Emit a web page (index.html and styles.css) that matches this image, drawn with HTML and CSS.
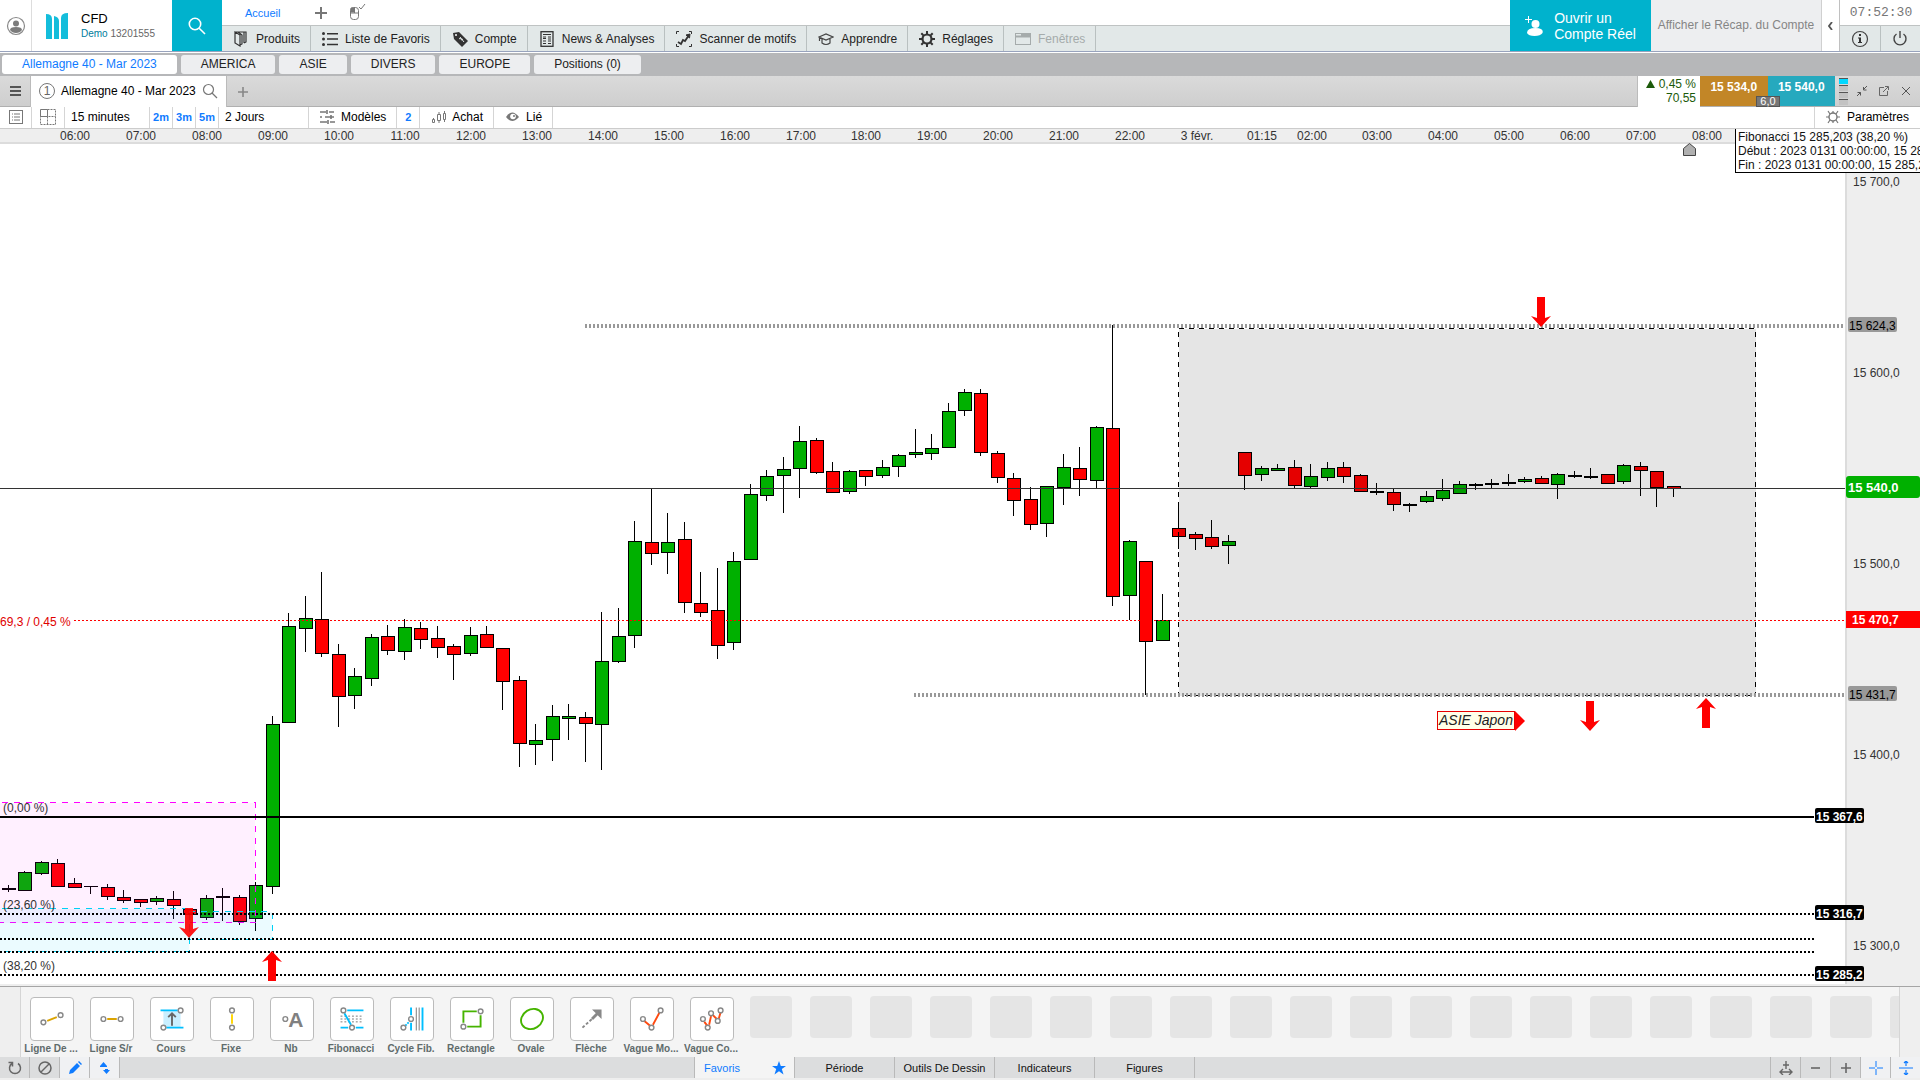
FILE: index.html
```html
<!DOCTYPE html>
<html lang="fr">

<head>
    <meta charset="UTF-8">
    <title>Allemagne 40 - Mar 2023</title>
    <link rel="stylesheet" href="styles.css">
</head>

<body>
    <header class="header">
        <button class="user" aria-label="Profil">
            <svg width="20" height="20" viewBox="0 0 20 20"><circle cx="10" cy="10" r="8.5" fill="none" stroke="#8a8a8a" stroke-width="1.2"/><circle cx="10" cy="7.5" r="3" fill="#7c7c7c"/><path d="M4 14q0-3 6-3t6 3q-2 3-6 3t-6-3z" fill="#7c7c7c"/></svg>
        </button>
        <div class="account">
            <svg width="22" height="26" viewBox="0 0 22 26" fill="#14bddb"><path d="M0 1q6 0 6 5v20H0zM8 3q5 1 5 5v18H8zM15 5q0-5 7-5v26h-7z"/></svg>
            <div>
                <div class="account-name">CFD</div>
                <div class="account-id"><span>Demo</span> 13201555</div>
            </div>
        </div>
        <button class="search" aria-label="Rechercher">
            <svg width="18" height="18" viewBox="0 0 18 18" fill="none" stroke="#fff" stroke-width="1.6"><circle cx="7" cy="7" r="5.7"/><path d="M11.2 11.2L17 17"/></svg>
        </button>
        <div class="menus">
            <div class="pages">
                <a href="#">Accueil</a>
                <button aria-label="Ajouter"><svg width="12" height="12" viewBox="0 0 12 12" stroke="#777" stroke-width="2"><path d="M6 0v12M0 6h12"/></svg></button>
                <button aria-label="Souris"><svg width="18" height="18" viewBox="0 0 18 18" fill="none" stroke="#777"><rect x="1.5" y="3.500" width="8" height="12" rx="3"/><path d="M1.500 9h8M5.500 3.500V9M10 3l2 2 4-5" /><path d="M2 4h3v4H2z" fill="#777"/></svg></button>
            </div>
            <nav class="toolbar">
                <button><svg width="16" height="16" viewBox="0 0 16 16" fill="none" stroke="#333" stroke-width="1.2"><path d="M2 1h11v10l-2 1M2 1l5 3v11l-5-3zM5 1l4 3v9l-2 1M11 1v11"/></svg>Produits</button>
                <button><svg width="16" height="16" viewBox="0 0 16 16" fill="#333"><circle cx="1.500" cy="2.500" r="1.500"/><circle cx="1.500" cy="8" r="1.500"/><circle cx="1.500" cy="13.500" r="1.500"/><path d="M5 2h11v1.500H5zM5 7.300h11v1.500H5zM5 12.700h11v1.500H5z"/></svg>Liste de Favoris</button>
                <button><svg width="16" height="16" viewBox="0 0 16 16"><path d="M1 2l6-1 9 9-6 6-8-8z" fill="#333"/><circle cx="4" cy="4" r="1" fill="#fff"/><path d="M7 8q2-2 2 0t2 0M8 6l4 5" stroke="#e2e8e8" fill="none"/></svg>Compte</button>
                <button><svg width="16" height="16" viewBox="0 0 16 16" fill="none" stroke="#333"><rect x="2" y=".7" width="12" height="14.600" stroke-width="1.300"/><path d="M4 3.500h8M4 6h3M4 7.500h3M9 6h3M9 8h3M4 10h3M9 10h3M4 12.500h3M9 12.500h3"/></svg>News &amp; Analyses</button>
                <button><svg width="16" height="16" viewBox="0 0 16 16" fill="none" stroke="#333"><path d="M.5 3V.5H3M13 .5h2.500V3M15.500 13v2.500H13M3 15.500H.5V13"/><path d="M2 11l3 2 2-4 2 1 4-6" stroke-width="1.800"/><path d="M10 4l4-1-.5 4z" fill="#333"/></svg>Scanner de motifs</button>
                <button><svg width="16" height="16" viewBox="0 0 16 16" fill="none" stroke="#444" stroke-width="1.200"><path d="M1 6l7-3 7 3-7 3zM4 8v4q4 3 8 0V8M1.500 6v4"/></svg>Apprendre</button>
                <button><svg width="16" height="16" viewBox="0 0 16 16" fill="none" stroke="#333"><circle cx="8" cy="8" r="4.500" stroke-width="2.200"/><path d="M8 0v3M8 13v3M0 8h3M13 8h3M2.300 2.300l2 2M11.700 11.700l2 2M13.700 2.300l-2 2M4.300 11.700l-2 2" stroke-width="2"/></svg>Réglages</button>
                <button disabled><svg width="16" height="16" viewBox="0 0 16 16" fill="none" stroke="#a5abab"><rect x=".5" y="2.500" width="15" height="11"/><path d="M1 5.500h14M6 4h9" stroke-width="2"/></svg>Fenêtres</button>
            </nav>
        </div>
        <button class="open-account">
            <svg width="18" height="20" viewBox="0 0 18 20" fill="#fff"><circle cx="10.500" cy="8" r="4"/><path d="M2 17q0-5 8.500-5t7 5q-2 3-8 3t-7.500-3zM0 3h3V0h1v3h3v1H4v3H3V4H0z"/></svg>
            <span>Ouvrir un<br>Compte Réel</span>
        </button>
        <button class="recap">Afficher le Récap. du Compte</button>
        <button class="collapse" aria-label="Replier"><svg width="5" height="8" viewBox="0 0 5 8" fill="none" stroke="#555" stroke-width="1.800"><path d="M4 0L1 4l3 4"/></svg></button>
        <div class="status">
            <time class="clock">07:52:30</time>
            <div class="status-buttons">
                <button aria-label="Informations"><svg width="18" height="18" viewBox="0 0 18 18"><circle cx="9" cy="9" r="7.500" fill="none" stroke="#444" stroke-width="1.200"/><path d="M8 4h2v2H8zM7 7.500h3V12h1v1H7v-1h1V8.500H7z" fill="#333"/></svg></button>
                <button aria-label="Déconnexion"><svg width="18" height="18" viewBox="0 0 18 18" fill="none" stroke="#444" stroke-width="1.400"><path d="M5.500 4a6 6 0 1 0 7 0M9 1v7"/></svg></button>
            </div>
        </div>
    </header>

    <nav class="workspaces">
        <button class="active">Allemagne 40 - Mar 2023</button>
        <button>AMERICA</button>
        <button>ASIE</button>
        <button>DIVERS</button>
        <button>EUROPE</button>
        <button>Positions (0)</button>
    </nav>

    <div class="titlebar">
        <button class="burger" aria-label="Menu"><svg width="11" height="11" viewBox="0 0 11 11" fill="#555"><path d="M0 0h11v2H0zM0 4h11v2H0zM0 8h11v2H0z"/></svg></button>
        <div class="chart-tab">
            <span class="chart-number">1</span>
            <span>Allemagne 40 - Mar 2023</span>
            <svg width="16" height="16" viewBox="0 0 16 16" fill="none" stroke="#777" stroke-width="1.200"><circle cx="6.500" cy="6.500" r="5"/><path d="M10 10l5 5"/></svg>
        </div>
        <button class="add-tab" aria-label="Nouvel onglet"><svg width="10" height="10" viewBox="0 0 10 10" stroke="#888" stroke-width="1.600"><path d="M5 0v10M0 5h10"/></svg></button>
        <div class="change">
            <div><svg width="9" height="8" viewBox="0 0 9 8"><path d="M4.500 0L9 8H0z" fill="#1c5a0a"/></svg> 0,45 %</div>
            <div>70,55</div>
        </div>
        <div class="quotes">
            <button class="sell">15 534,0</button>
            <button class="buy">15 540,0</button>
            <span class="spread">6,0</span>
        </div>
        <div class="depth"><i></i><i></i><i></i><i></i></div>
        <div class="window-buttons">
            <button aria-label="Réduire"><svg width="10" height="10" viewBox="0 0 10 10" fill="none" stroke="#555"><path d="M10 0L6.500 3.500M6.500 1v3h3M0 10l3.500-3.500M.5 6.500h3v3"/></svg></button>
            <button aria-label="Détacher"><svg width="10" height="10" viewBox="0 0 10 10" fill="none" stroke="#666"><path d="M5 1.500H.5v8h8V5M4 6l5-5M6 .5h3.500V4"/></svg></button>
            <button aria-label="Fermer"><svg width="10" height="10" viewBox="0 0 10 10" stroke="#555"><path d="M1 1l8 8M9 1L1 9"/></svg></button>
        </div>
    </div>

    <div class="chart-toolbar">
        <button class="tool-list" aria-label="Liste"><svg width="14" height="14" viewBox="0 0 14 14" fill="none" stroke="#777"><rect x=".5" y=".5" width="13" height="13"/><path d="M3 4h1M5 4h6M3 7h1M5 7h6M3 10h1M5 10h6"/></svg></button>
        <button class="tool-grid" aria-label="Disposition"><svg width="16" height="16" viewBox="0 0 16 16" fill="none" stroke="#777"><path d="M.5.500h7v7h-7z"/><path d="M7.500.500h8v15H.5v-8h15M7.500 7.500v8" stroke-dasharray="2 1"/></svg></button>
        <select class="interval" aria-label="Intervalle"><option>15 minutes</option></select>
        <button class="shortcut">2m</button>
        <button class="shortcut">3m</button>
        <button class="shortcut">5m</button>
        <select class="range" aria-label="Durée"><option>2 Jours</option></select>
        <button class="tool"><svg width="16" height="14" viewBox="0 0 16 14" stroke="#777" stroke-width="1.600"><path d="M0 2h6M9 2h5M7 0v4M0 7h2M5 7h9M11 5v4M0 12h7M10 12h5M8 10v4"/></svg>Modèles</button>
        <button class="shortcut">2</button>
        <button class="tool"><svg width="16" height="14" viewBox="0 0 16 14" fill="none" stroke="#777"><path d="M1.500 9.500h2v3h-2zM6.500 4.500h3v6h-3zM12.500 3.500h2v6h-2zM2.500 8v1M8 2v2M8 11v2M13.500 1v2M13.500 10v2"/></svg>Achat</button>
        <button class="tool"><svg width="16" height="14" viewBox="0 0 16 14"><path d="M1 7q6-9 13 0-7 8-13 0z" fill="#777"/><circle cx="8" cy="6.500" r="2.800" fill="#fff"/><circle cx="9" cy="6" r="1" fill="#777"/></svg>Lié</button>
        <button class="settings"><svg width="14" height="14" viewBox="0 0 14 14" fill="none" stroke="#777"><circle cx="7" cy="7" r="4" stroke-width="1.400"/><path d="M7 3L7 1M7 11v2M3 7H0M11 7h3M4 4L2 1M10 4l2-3M4 10l-2 3M10 10l2 3" stroke-width="1.200"/></svg>Paramètres</button>
    </div>

    <main class="chart">
        <svg class="time-axis" id="timeAxis"></svg>
        <div class="chart-body">
            <svg class="plot" id="plot">
                <!-- coordinates in the plot are counted from the top of the window -->
                <g transform="translate(0 -144)">
                    <g id="candles" shape-rendering="crispEdges"></g>

                    <!-- zones -->
                    <g shape-rendering="crispEdges" stroke-width="1">
                        <rect class="zone-pink" x="-10" y="802.500" width="265" height="120"/>
                        <rect class="zone-cyan" x="-10" y="908.500" width="199" height="43"/>
                        <rect class="zone-cyan" x="189" y="911.500" width="83" height="28"/>
                        <rect class="zone-grey" x="1178.500" y="328.500" width="577" height="367"/>
                    </g>

                    <!-- levels -->
                    <g shape-rendering="crispEdges" fill="none">
                        <path class="level-grey" d="M585 326H1845M914 695H1845"/>
                        <path class="level-solid" d="M0 817H1814"/>
                        <path class="level-dotted" d="M0 914H1814M0 939H1814M0 952H1814M0 975H1814"/>
                        <path d="M0 488.500H1845" stroke="#333"/>
                        <path class="level-red" d="M74 620.500H1845"/>
                    </g>

                    <g class="chart-text">
                        <text x="0" y="626" fill="#e00000">69,3 / 0,45 %</text>
                        <text x="3" y="812">(0,00 %)</text>
                        <text x="3" y="909">(23,60 %)</text>
                        <text x="3" y="970">(38,20 %)</text>
                    </g>

                    <g fill="red">
                        <path d="M0 0L-10 11L-4 9V30H4V9L10 11Z" transform="translate(272 951)"/>
                        <path d="M0 0L-10 11L-4 9V30H4V9L10 11Z" transform="translate(1706 698)"/>
                        <path d="M0 30L-10 19L-4 21V0H4V21L10 19Z" transform="translate(189 908)" opacity="0.9"/>
                        <path d="M0 30L-10 19L-4 21V0H4V21L10 19Z" transform="translate(1541 297)"/>
                        <path d="M0 30L-10 19L-4 21V0H4V21L10 19Z" transform="translate(1590 701)"/>
                        <path d="M1515 711l10 10-10 10z"/>
                    </g>
                    <rect x="1437.500" y="711.500" width="77" height="18" fill="#ffffe8" stroke="#e60000"/>
                    <text class="note" x="1439" y="725">ASIE Japon</text>
                    <path d="M1683.500 155.500v-7l6-5 6 5v7z" fill="#b0b0b0" stroke="#444"/>
                </g>
            </svg>
            <svg class="price-axis">
                <g transform="translate(-1847 -144)">
                    <g class="chart-text">
                        <text x="1853" y="186">15 700,0</text>
                        <text x="1853" y="377">15 600,0</text>
                        <text x="1853" y="568">15 500,0</text>
                        <text x="1853" y="759">15 400,0</text>
                        <text x="1853" y="950">15 300,0</text>
                    </g>
                    <g class="tag-grey">
                        <rect x="1848" y="317" width="49" height="15" rx="2"/><text x="1849" y="330">15 624,3</text>
                        <rect x="1848" y="686" width="49" height="15" rx="2"/><text x="1849" y="699">15 431,7</text>
                    </g>
                    <g class="tag-last">
                        <rect x="1846" y="476" width="74" height="22" rx="3"/><text x="1848" y="492">15 540,0</text>
                    </g>
                    <g class="tag-close">
                        <rect x="1846" y="611" width="74" height="17"/><text x="1852" y="624">15 470,7</text>
                    </g>
                    <g class="tag-black">
                        <rect x="1815" y="808" width="49" height="15" rx="2"/><text x="1816" y="821">15 367,6</text>
                        <rect x="1815" y="905" width="49" height="15" rx="2"/><text x="1816" y="918">15 316,7</text>
                        <rect x="1815" y="966" width="49" height="15" rx="2"/><text x="1816" y="979">15 285,2</text>
                    </g>
                </g>
            </svg>
        </div>
        <div class="tooltip">Fibonacci 15 285,203 (38,20 %)<br>Début : 2023 0131 00:00:00, 15 285,203<br>Fin : 2023 0131 00:00:00, 15 285,203</div>
    </main>

    <section class="palette">
        <div class="palette-items" id="palette">
            <button><svg viewBox="0 0 44 44"><path d="M17 24l10-4" stroke="#dba300"/><circle cx="13" cy="25.500" r="2.500"/><circle cx="31" cy="18" r="2.500"/></svg><span>Ligne De ...</span></button>
            <button><svg viewBox="0 0 44 44"><path d="M17 22h10" stroke="#dba300"/><circle cx="13" cy="22" r="2.500"/><circle cx="31" cy="22" r="2.500"/></svg><span>Ligne S/r</span></button>
            <button><svg viewBox="0 0 44 44"><path d="M13 13h18v18H13z" fill="#c9efff" stroke="none"/><path d="M10 13h18M16 31h18" stroke="#00bfff"/><path d="M22 29V16M18 20l4-4 4 4" stroke="#666"/><circle cx="31" cy="13" r="2.500"/><circle cx="13" cy="31" r="2.500"/></svg><span>Cours</span></button>
            <button><svg viewBox="0 0 44 44"><path d="M22 17v10" stroke="#ffd500"/><circle cx="22" cy="13" r="2.500"/><circle cx="22" cy="31" r="2.500"/></svg><span>Fixe</span></button>
            <button><svg viewBox="0 0 44 44"><circle cx="15" cy="22" r="2.500"/><text x="18" y="30">A</text></svg><span>Nb</span></button>
            <button><svg viewBox="0 0 44 44"><path d="M10 19h24M10 22h24M10 25h24" stroke="#777" stroke-width="1" stroke-dasharray="2 2"/><path d="M17 13h17M10 31h8M26 31h8M14 16l7 12" stroke="#00bfff"/><circle cx="13" cy="13" r="2.500"/><circle cx="22" cy="31" r="2.500"/></svg><span>Fibonacci</span></button>
            <button><svg viewBox="0 0 44 44"><path d="M21 10v8M21 26v8M33 10v24" stroke="#00bfff"/><path d="M15 29l4-4" stroke="#00bfff" stroke-dasharray="2 1"/><path d="M26.500 10v24M29.500 10v24" stroke="#777" stroke-width="1"/><circle cx="21" cy="22" r="2.500"/><circle cx="13" cy="31" r="2.500"/></svg><span>Cycle Fib.</span></button>
            <button><svg viewBox="0 0 44 44"><path d="M27 14H13v12M17 30h14V18" stroke="#46b400"/><circle cx="31" cy="14" r="2.500"/><circle cx="13" cy="30" r="2.500"/></svg><span>Rectangle</span></button>
            <button><svg viewBox="0 0 44 44"><ellipse cx="22" cy="22" rx="12" ry="10" transform="rotate(-32 22 22)" fill="none" stroke="#46b400"/></svg><span>Ovale</span></button>
            <button><svg viewBox="0 0 44 44"><path d="M12 31l10-9" stroke="#888" stroke-dasharray="3 2"/><path d="M22 22l7-7" stroke="#888" stroke-width="3"/><path d="M22 12h10v10l-3-3-4-4z" fill="#888" stroke="none"/></svg><span>Flèche</span></button>
            <button><svg viewBox="0 0 44 44"><path d="M14 24l6 5M23 28l7-13" stroke="#ff4a10"/><circle cx="12.500" cy="22" r="2.500"/><circle cx="21.500" cy="31" r="2.500"/><circle cx="31" cy="13" r="2.500"/></svg><span>Vague Mo...</span></button>
            <button><svg viewBox="0 0 44 44"><path d="M14 25l3 4M19 28l2-9M23 18l4 4M29 22l2-7" stroke="#ff4a10"/><circle cx="12.500" cy="22" r="2.500"/><circle cx="17.500" cy="31" r="2.500"/><circle cx="21" cy="16" r="2.500"/><circle cx="28" cy="24" r="2.500"/><circle cx="31" cy="13" r="2.500"/></svg><span>Vague Co...</span></button>
        </div>
    </section>

    <footer class="bottombar">
        <div class="group">
            <button aria-label="Rétablir"><svg width="16" height="16" viewBox="0 0 16 16" fill="none" stroke="#666" stroke-width="1.500"><path d="M11 3.500a5.500 5.500 0 1 1-6 0M1.500 2.500h4v4"/></svg></button>
            <button aria-label="Masquer"><svg width="16" height="16" viewBox="0 0 16 16" fill="none" stroke="#666" stroke-width="1.500"><circle cx="8" cy="8" r="6"/><path d="M4 12l8-8"/></svg></button>
            <button class="on" aria-label="Dessiner"><svg width="16" height="16" viewBox="0 0 16 16" fill="#0f7bff"><path d="M2 14l1-4 7-7 3 3-7 7zM11 2l1-1 3 3-1 1z"/></svg></button>
            <button class="on" aria-label="Aligner"><svg width="16" height="16" viewBox="0 0 16 16" fill="#0f7bff"><path d="M3 6l3.500-4L10 6v1H3zM6 10h7l-3.500 4zM8 9h3v2H8z"/></svg></button>
        </div>
        <nav class="categories">
            <button class="on favorites">Favoris <svg width="14" height="14" viewBox="0 0 14 14"><path d="M7 0l1.800 5H14l-4.200 3 1.700 5.500L7 10.200 2.500 13.500 4.200 8 0 5h5.200z" fill="#0f7bff"/></svg></button>
            <button>Période</button>
            <button>Outils De Dessin</button>
            <button>Indicateurs</button>
            <button>Figures</button>
        </nav>
        <div class="group right">
            <button aria-label="Ajuster"><svg width="14" height="14" viewBox="0 0 14 14" fill="none" stroke="#666" stroke-width="1.400"><path d="M7 0v8M4 4h6M1 11h12M4 8l-3 3 3 3M10 8l3 3-3 3"/></svg></button>
            <button aria-label="Zoom arrière"><svg width="10" height="10" viewBox="0 0 10 10" stroke="#666" stroke-width="1.600"><path d="M0 5h9"/></svg></button>
            <button aria-label="Zoom avant"><svg width="10" height="10" viewBox="0 0 10 10" stroke="#666" stroke-width="1.600"><path d="M0 5h10M5 0v10"/></svg></button>
            <button class="on" aria-label="Curseur"><svg width="14" height="14" viewBox="0 0 14 14" stroke="#0f7bff"><path d="M0 7h6M8 7h6M7 0v6M7 8v6"/></svg></button>
            <button class="on" aria-label="Échelle"><svg width="14" height="14" viewBox="0 0 14 14" fill="none" stroke="#0f7bff" stroke-width="1.200"><path d="M0 7h14M7 0v5M7 9v5M5 2l2-2 2 2M5 12l2 2 2-2"/></svg></button>
        </div>
    </footer>

    <script src="script.js"></script>
</body>

</html>
```
FILE: styles.css
```css
* {
    box-sizing: border-box;
}

body {
    margin: 0;
    height: 100vh;
    display: flex;
    flex-direction: column;
    overflow: hidden;
    background: #eee;
    color: #222;
    font-family: "Liberation Sans", Arial, sans-serif;
    font-size: 12px;
    line-height: 14px;
}

button,
select {
    margin: 0;
    padding: 0;
    border: 0;
    background: none;
    color: inherit;
    font: inherit;
    white-space: nowrap;
    cursor: pointer;
}

select {
    appearance: none;
}

button {
    display: flex;
    align-items: center;
    justify-content: center;
}

svg {
    flex: none;
}

/* header */
.header {
    display: flex;
    flex: none;
    height: 53px;
    background: #fff;
    border-bottom: 1px solid #fff;
    box-shadow: inset 0 -1px #98a3bd;
    padding-bottom: 1px;
}

.user {
    width: 32px;
    border-right: 1px solid #ddd;
}

.account {
    display: flex;
    align-items: center;
    gap: 13px;
    width: 140px;
    padding-left: 14px;
}

.account-name {
    color: #000;
    font-size: 13px;
    line-height: 16px;
}

.account-id {
    color: #666;
    font-size: 10px;
}

.account-id span {
    color: #007c9c;
}

.search {
    width: 50px;
    background: #00b2cd;
}

.menus {
    display: flex;
    flex: 1;
    flex-direction: column;
    min-width: 0;
}

.pages {
    display: flex;
    align-items: center;
    height: 25px;
    padding-left: 23px;
}

.pages a {
    margin-right: 35px;
    color: #0f7bff;
    font-size: 11px;
    text-decoration: none;
}

.pages button {
    margin-right: 22px;
}

.toolbar {
    display: flex;
    flex: 1;
    background: #e2e8e8;
    border-top: 1px solid #bfc3c3;
}

.toolbar button {
    gap: 7px;
    padding: 0 10px 0 11px;
    border-right: 1px solid #b9c0c0;
}

.toolbar button:disabled {
    color: #a5abab;
}

.open-account {
    gap: 11px;
    width: 141px;
    background: #00b2cd;
    color: #fff;
    font-size: 14px;
    line-height: 16px;
    text-align: left;
}

.recap {
    width: 170px;
    padding-bottom: 2px;
    background: #edeef0;
    color: #858585;
}

.collapse {
    width: 19px;
    border-left: 1px solid #d0d0d0;
    border-right: 1px solid #c0c0c0;
}

.status {
    width: 80px;
}

.clock {
    display: block;
    height: 25px;
    padding-left: 2px;
    color: #777;
    font-family: "Liberation Mono", monospace;
    font-size: 13px;
    line-height: 26px;
    text-align: center;
}

.status-buttons {
    display: flex;
    height: 26px;
    background: #e2e8e8;
    border-top: 1px solid #bfc3c3;
}

.status-buttons button {
    flex: 1;
}

.status-buttons button + button {
    border-left: 1px solid #b9c0c0;
}

/* workspace tabs */
.workspaces {
    display: flex;
    flex: none;
    gap: 4px;
    height: 23px;
    padding: 2px;
    background: #b6b7b9;
}

.workspaces button {
    padding: 0 20px 2px;
    border-radius: 3px;
    background: #edeef0;
}

.workspaces .active {
    background: #fff;
    color: #0f7bff;
}

/* chart window title */
.titlebar {
    display: flex;
    flex: none;
    height: 31px;
    background: linear-gradient(#dadada, #cecece);
    box-shadow: inset 0 -1px #b0b0b0;
}

.burger {
    width: 31px;
    border-right: 1px solid #bbb;
}

.chart-tab {
    display: flex;
    align-items: center;
    gap: 6px;
    padding: 0 8px 2px;
    border-right: 1px solid #bbb;
    background: #fff;
    color: #000;
}

.chart-number {
    width: 16px;
    height: 16px;
    border: 1px solid #777;
    border-radius: 8px;
    color: #666;
    text-align: center;
}

.add-tab {
    width: 32px;
}

.change {
    width: 63px;
    margin-left: auto;
    padding: 1px 4px;
    border-left: 1px solid #bbb;
    background: #fff;
    color: #1c5a0a;
    text-align: right;
}

.quotes {
    position: relative;
    display: flex;
    width: 135px;
    height: 30px;
}

.quotes button {
    flex: 1;
    padding-bottom: 8px;
    color: #fff;
    font-weight: bold;
}

.sell {
    background: #c28627;
}

.buy {
    background: #26a9be;
}

.spread {
    position: absolute;
    bottom: -1px;
    left: 56px;
    width: 24px;
    border: 1px solid #555;
    background: #777;
    color: #fff;
    font-size: 11px;
    line-height: 9px;
    text-align: center;
}

.depth {
    display: flex;
    flex-direction: column;
    gap: 1px;
    width: 9px;
    margin: 2px 0 0 4px;
}

.depth i {
    height: 6px;
    border-top: 1px solid #555;
    background: #c2c2c2;
}

.depth i:first-child {
    background: #00d8ff;
}

.window-buttons {
    display: flex;
    align-items: center;
    gap: 12px;
    padding: 0 9px 2px;
}

/* chart toolbar */
.chart-toolbar {
    display: flex;
    flex: none;
    height: 22px;
    background: #fff;
    border-bottom: 1px solid #ccc;
    color: #000;
}

.chart-toolbar > * {
    padding-bottom: 1px;
    border-right: 1px solid #d5d5d5;
}

.tool-list {
    width: 32px;
}

.tool-grid {
    width: 33px;
}

.interval {
    width: 85px;
    padding-left: 6px;
}

.shortcut {
    width: 23px;
    color: #0f7bff;
    font-size: 11px;
    font-weight: bold;
}

.range {
    width: 90px;
    padding-left: 6px;
}

.tool {
    gap: 5px;
    padding: 0 10px 1px 11px;
}

.settings {
    gap: 7px;
    margin-left: auto;
    padding: 0 11px 1px 11px;
    border-left: 1px solid #d5d5d5;
    border-right: 0;
}

/* chart */
.chart {
    position: relative;
    display: flex;
    flex: 1;
    flex-direction: column;
    min-height: 0;
    border-bottom: 1px solid #a5a5a5;
}

.time-axis {
    width: 100%;
    height: 15px;
    background: #eee;
    border-bottom: 2px solid #dcdcdc;
}

.chart-body {
    display: flex;
    flex: 1;
    min-height: 0;
    margin-bottom: 2px;
    background: #fff;
}

.plot {
    flex: 1;
    min-width: 0;
    height: 100%;
    overflow: visible;
}

.price-axis {
    width: 75px;
    height: 100%;
    background: #eee;
    border-left: 2px solid #dcdcdc;
    overflow: visible;
}

.time-axis text,
.chart-text text {
    fill: #333;
}

.chart-text text[fill] {
    fill: #e00000;
}

.time-axis text {
    text-anchor: middle;
}

.note {
    fill: #222;
    font-size: 14px;
    font-style: italic;
}

.candle-up rect {
    fill: #00b000;
    stroke: #000;
}

.candle-down rect {
    fill: #f00;
    stroke: #000;
}

.wick {
    stroke: #000;
}

.zone-pink {
    fill: rgba(255, 0, 255, 0.06);
    stroke: #f0f;
    stroke-dasharray: 6 6;
}

.zone-cyan {
    fill: rgba(0, 210, 255, 0.08);
    stroke: #00d2f5;
    stroke-dasharray: 6 6;
}

.zone-grey {
    fill: rgba(0, 0, 0, 0.1);
    stroke: #000;
    stroke-dasharray: 5 5;
}

.level-grey {
    stroke: #999;
    stroke-width: 4;
    stroke-dasharray: 2 2;
}

.level-solid {
    stroke: #000;
    stroke-width: 2;
}

.level-dotted {
    stroke: #000;
    stroke-width: 2;
    stroke-dasharray: 2 2;
}

.level-red {
    stroke: #f00;
    stroke-dasharray: 2 2;
}

.tag-grey rect {
    fill: #999;
}

.tag-last rect {
    fill: #00b000;
}

.tag-close rect {
    fill: #f00;
}

.tag-last text,
.tag-close text,
.tag-black text {
    fill: #fff;
    font-weight: bold;
}

.tag-last text {
    font-size: 13px;
}

.tooltip {
    position: absolute;
    top: 0;
    right: 0;
    width: 185px;
    padding: 1px 0 0 2px;
    overflow: hidden;
    border: 1px solid #000;
    border-width: 0 0 1px 1px;
    background: rgba(255, 255, 255, 0.93);
    color: #111;
    white-space: nowrap;
}

/* drawing palette */
.palette {
    flex: none;
    height: 70px;
    padding: 0 20px;
    background: #efefef;
}

.palette-items {
    display: flex;
    height: 100%;
    overflow: hidden;
    border: 1px solid #d5d5d5;
    border-width: 0 1px;
    background: #f4f4f4;
}

.palette button {
    display: block;
    flex: none;
    width: 60px;
    padding-top: 8px;
    color: #5f6b6b;
    font-size: 10px;
    font-weight: bold;
    line-height: 12px;
}

.palette button svg {
    display: block;
    width: 44px;
    height: 44px;
    margin: 0 8px 2px 9px;
    border: 1px solid #bbb;
    border-radius: 4px;
    background: #fff;
    fill: none;
    stroke-width: 2;
}

.palette circle {
    fill: #fff;
    stroke: #888;
    stroke-width: 1.5px;
}

.palette text {
    fill: #808080;
    font-size: 22px;
}

.palette button span {
    display: block;
}

.slot {
    flex: none;
    width: 42px;
    height: 42px;
    margin: 9px;
    border-radius: 4px;
    background: #e5e5e5;
}

/* bottom bar */
.bottombar {
    display: flex;
    flex: none;
    height: 21px;
    margin-bottom: 2px;
    background: #dcddde;
}

.group {
    display: flex;
    flex: 1;
}

.bottombar button {
    width: 30px;
    border-right: 1px solid #b9b9b9;
}

.bottombar .on {
    background: #f0f1f3;
    color: #0f7bff;
}

.categories {
    display: flex;
    border-left: 1px solid #b9b9b9;
    color: #111;
    font-size: 11px;
}

.bottombar .categories button {
    width: 100px;
}

/* the side groups share the free width, tabs lean to the left of the middle */
.right {
    flex: 1 0 31px;
    justify-content: flex-end;
}

.categories .favorites {
    justify-content: space-between;
    padding: 0 8px 0 9px;
    background: #f4f4f4;
}

.right button {
    border-right: 0;
    border-left: 1px solid #b9b9b9;
}
```
FILE: script.js
```js
const NS = "http://www.w3.org/2000/svg";

function add(parent, name, attrs) {
    const el = document.createElementNS(NS, name);
    for (const key in attrs) el.setAttribute(key, attrs[key]);
    parent.appendChild(el);
    return el;
}

// time axis: [x, label]
const times = [[75, "06:00"], [141, "07:00"], [207, "08:00"], [273, "09:00"], [339, "10:00"],
    [405, "11:00"], [471, "12:00"], [537, "13:00"], [603, "14:00"], [669, "15:00"], [735, "16:00"],
    [801, "17:00"], [866, "18:00"], [932, "19:00"], [998, "20:00"], [1064, "21:00"], [1130, "22:00"],
    [1197, "3 févr."], [1262, "01:15"], [1312, "02:00"], [1377, "03:00"], [1443, "04:00"],
    [1509, "05:00"], [1575, "06:00"], [1641, "07:00"], [1707, "08:00"], [1773, "09:00"], [1839, "10:00"]];
const timeAxis = document.getElementById("timeAxis");
times.forEach(([x, label]) => {
    add(timeAxis, "text", { x: x, y: 11 }).textContent = label;
});

// candles: [direction, body top, body bottom, wick top, wick bottom]
const candles = [
    ["u", 888, 890, 885, 892], ["u", 872, 891, 871, 891], ["u", 862, 874, 861, 875],
    ["d", 863, 887, 859, 887], ["d", 883, 888, 878, 888], ["d", 886, 887, 886, 894],
    ["d", 887, 897, 884, 900], ["d", 897, 901, 890, 903], ["d", 899, 903, 899, 907],
    ["u", 898, 902, 896, 905], ["d", 899, 906, 891, 919], ["d", 909, 915, 909, 915],
    ["u", 898, 918, 895, 920], ["u", 896, 898, 888, 921], ["d", 897, 922, 895, 925],
    ["u", 885, 919, 882, 931], ["u", 724, 887, 716, 894], ["u", 626, 723, 613, 723],
    ["u", 618, 629, 596, 652], ["d", 619, 654, 572, 657], ["d", 654, 697, 644, 727],
    ["u", 676, 696, 668, 709], ["u", 637, 679, 634, 686], ["d", 636, 651, 625, 655],
    ["u", 627, 652, 619, 660], ["d", 628, 640, 622, 649], ["d", 638, 648, 626, 658],
    ["d", 646, 655, 644, 680], ["u", 635, 654, 627, 656], ["d", 634, 648, 626, 648],
    ["d", 648, 682, 648, 710], ["d", 680, 744, 676, 767], ["u", 740, 745, 724, 765],
    ["u", 716, 740, 705, 761], ["u", 716, 719, 704, 740], ["d", 717, 724, 712, 762],
    ["u", 661, 725, 612, 770], ["u", 636, 662, 608, 663], ["u", 541, 636, 521, 648],
    ["d", 542, 554, 488, 565], ["u", 542, 553, 513, 574], ["d", 539, 603, 522, 613],
    ["d", 603, 613, 572, 617], ["d", 610, 646, 568, 659], ["u", 561, 643, 552, 650],
    ["u", 494, 560, 484, 560], ["u", 476, 496, 470, 501], ["u", 469, 476, 457, 513],
    ["u", 441, 469, 426, 498], ["d", 440, 473, 438, 474], ["d", 471, 493, 462, 493],
    ["u", 471, 492, 470, 494], ["d", 470, 477, 470, 486], ["u", 467, 476, 460, 478],
    ["u", 455, 467, 454, 477], ["u", 452, 455, 429, 458], ["u", 448, 454, 434, 460],
    ["u", 411, 448, 403, 448], ["u", 392, 411, 389, 416], ["d", 393, 453, 389, 456],
    ["d", 453, 478, 451, 483], ["d", 478, 501, 473, 516], ["d", 499, 525, 487, 530],
    ["u", 486, 524, 486, 537], ["u", 467, 488, 454, 505], ["d", 468, 480, 447, 496],
    ["u", 427, 481, 426, 488], ["d", 428, 597, 325, 606], ["u", 541, 596, 540, 620],
    ["d", 561, 642, 561, 695], ["u", 620, 641, 594, 641], ["d", 528, 537, 502, 549],
    ["d", 534, 539, 532, 550], ["d", 537, 547, 520, 549], ["u", 541, 546, 535, 564],
    ["d", 452, 476, 452, 490], ["u", 468, 475, 466, 481], ["u", 468, 471, 464, 471],
    ["d", 467, 486, 460, 488], ["u", 476, 487, 464, 488], ["u", 468, 478, 462, 481],
    ["d", 467, 477, 462, 483], ["d", 475, 492, 474, 492], ["d", 491, 493, 483, 495],
    ["d", 492, 505, 489, 511], ["u", 504, 506, 503, 512], ["u", 496, 502, 491, 503],
    ["u", 490, 499, 479, 501], ["u", 484, 494, 481, 494], ["d", 484, 486, 483, 490],
    ["u", 483, 485, 479, 488], ["u", 482, 484, 474, 486], ["u", 479, 482, 477, 483],
    ["d", 478, 484, 476, 484], ["u", 474, 485, 473, 499], ["d", 475, 477, 471, 478],
    ["d", 476, 478, 468, 479], ["d", 474, 484, 474, 484], ["u", 465, 482, 464, 484],
    ["d", 466, 471, 462, 496], ["d", 471, 488, 471, 507], ["d", 486, 489, 486, 497]
];
const STEP = 16.483;
const layer = document.getElementById("candles");
candles.forEach(([dir, top, bottom, high, low], i) => {
    const x = Math.round(2 + i * STEP);
    const g = add(layer, "g", { class: dir === "u" ? "candle-up" : "candle-down" });
    add(g, "path", { class: "wick", d: `M${x + 6.5} ${high}V${low}` });
    add(g, "rect", { x: x + 0.5, y: top + 0.5, width: 13, height: Math.max(bottom - top - 1, 0.01) });
});

// free slots at the end of the palette
const palette = document.getElementById("palette");
for (let i = 0; i < 20; i++) {
    const slot = document.createElement("div");
    slot.className = "slot";
    palette.appendChild(slot);
}
```
